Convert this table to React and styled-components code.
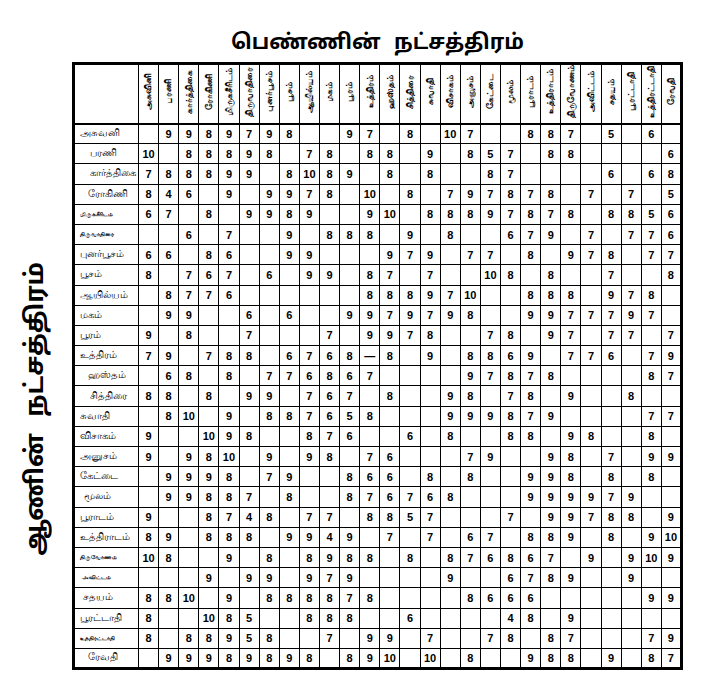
import React from 'react';
import styled, { createGlobalStyle } from 'styled-components';

const GlobalStyle = createGlobalStyle`
  body {
    margin: 0;
    background: #fff;
    color: #000;
    font-family: "Liberation Sans", Arial, sans-serif;
  }
`;

const STARS = [
  'அசுவினி', 'பரணி', 'கார்த்திகை', 'ரோகிணி', 'மிருகசீரிடம்', 'திருவாதிரை',
  'புனர்பூசம்', 'பூசம்', 'ஆயில்யம்', 'மகம்', 'பூரம்', 'உத்திரம்', 'ஹஸ்தம்',
  'சித்திரை', 'சுவாதி', 'விசாகம்', 'அனுசம்', 'கேட்டை', 'மூலம்', 'பூராடம்',
  'உத்திராடம்', 'திருவோணம்', 'அவிட்டம்', 'சதயம்', 'பூரட்டாதி',
  'உத்திரட்டாதி', 'ரேவதி',
];

// row label, indent, small text, values ("_" = empty)
const ROWS = [
  ['அசுவனி', 0, false, '_,9,9,8,9,7,9,8,_,_,9,7,_,8,_,10,7,_,_,8,8,7,_,5,_,6,_'],
  ['பரணி', 10, false, '10,_,8,8,8,9,8,_,7,8,_,8,8,_,9,_,8,5,7,_,8,8,_,_,_,_,6'],
  ['கார்த்திகை', 10, false, '7,8,8,8,9,9,_,8,10,8,9,_,8,_,8,_,_,8,7,_,_,_,_,6,_,6,8'],
  ['ரோகிணி', 8, false, '8,4,6,_,9,_,9,9,7,8,_,10,_,8,_,7,9,7,8,7,8,_,7,_,7,_,5'],
  ['மிருகசீரிடம்', 0, true, '6,7,_,8,_,9,9,8,9,_,_,9,10,_,8,8,8,9,7,8,7,8,_,8,8,5,6'],
  ['திருவாதிரை', 0, true, '_,_,6,_,7,_,_,9,_,8,8,8,_,9,_,8,_,_,6,7,9,_,7,_,7,7,6'],
  ['புனர்பூசம்', 0, false, '6,6,_,8,6,_,_,9,9,_,_,_,9,7,9,_,7,7,_,8,_,9,7,8,_,7,7'],
  ['பூசம்', 0, false, '8,_,7,6,7,_,6,_,9,9,_,8,7,_,7,_,_,10,8,_,8,_,_,7,_,_,8'],
  ['ஆயில்யம்', 0, false, '_,8,7,7,6,_,_,_,_,_,_,8,8,8,9,7,10,_,_,8,8,8,_,9,7,8,_'],
  ['மகம்', 0, false, '_,9,9,_,_,6,_,6,_,_,9,9,7,9,7,9,8,_,_,9,9,7,7,7,9,7,_'],
  ['பூரம்', 0, false, '9,_,8,_,_,7,_,_,_,7,_,9,9,7,8,_,_,7,8,_,9,7,_,7,7,_,7'],
  ['உத்திரம்', 0, false, '7,9,_,7,8,8,_,6,7,6,8,—,8,_,9,_,8,8,6,9,_,7,7,6,_,7,9'],
  ['ஹஸ்தம்', 8, false, '_,6,8,_,8,_,7,7,6,8,6,7,_,_,_,_,9,7,8,7,8,_,_,_,_,8,7'],
  ['சித்திரை', 10, false, '8,8,_,8,_,9,9,_,7,6,7,_,8,_,_,9,8,_,7,8,_,9,_,_,8,_,_'],
  ['சுவாதி', 0, false, '_,8,10,_,9,_,8,8,7,6,5,8,_,_,_,9,9,9,8,7,9,_,_,_,_,7,7'],
  ['விசாகம்', 0, false, '9,_,_,10,9,8,_,_,8,7,6,_,_,6,_,8,_,_,8,8,_,9,8,_,_,8,_'],
  ['அனுசம்', 0, false, '9,_,9,8,10,_,9,_,9,8,_,7,6,_,_,_,7,9,_,_,9,8,_,7,_,9,9'],
  ['கேட்டை', 0, false, '_,9,9,9,8,_,7,9,_,_,8,6,6,_,8,_,8,_,_,9,9,8,_,8,_,8,_'],
  ['மூலம்', 4, false, '_,9,9,8,8,7,_,8,_,_,8,7,6,7,6,8,_,_,_,9,9,9,9,7,9,_,_'],
  ['பூராடம்', 0, false, '9,_,_,8,7,4,8,_,7,7,_,8,8,5,7,_,_,_,7,_,9,9,7,8,8,_,9'],
  ['உத்திராடம்', 0, false, '8,9,_,8,8,8,_,9,9,4,9,_,7,_,7,_,6,7,_,8,8,9,_,8,_,9,10'],
  ['திருவோணம்', 0, true, '10,8,_,_,9,_,8,_,8,9,8,8,_,8,_,8,7,6,8,6,7,_,9,_,9,10,9'],
  ['அவிட்டம்', 2, true, '_,_,_,9,_,9,9,_,9,7,9,_,_,_,_,9,_,_,6,7,8,9,_,_,9,_,_'],
  ['சதயம்', 3, false, '8,8,10,_,9,_,8,8,8,8,7,8,_,_,_,_,8,6,6,6,_,_,_,_,_,9,9'],
  ['பூரட்டாதி', 0, false, '8,_,_,10,8,5,_,_,8,8,8,_,_,6,_,_,_,_,4,8,_,9,_,_,_,_,_'],
  ['உத்திரட்டாதி', 0, true, '8,_,8,8,9,5,8,_,_,7,_,9,9,_,7,_,_,7,8,_,8,7,_,_,_,7,9'],
  ['ரேவதி', 8, false, '_,9,9,9,8,9,8,9,8,_,8,9,10,_,10,_,8,_,_,9,8,8,_,9,_,8,7'],
];

const Page = styled.div`
  display: grid;
  grid-template-columns: 72px 611px;
  grid-template-rows: 62px auto;
`;

const Title = styled.h1`
  grid-column: 2;
  grid-row: 1;
  align-self: end;
  margin: 0 0 5px;
  text-align: center;
  font-family: "Noto Sans Tamil", "Lohit Tamil", "Noto Sans", sans-serif;
  font-size: 21px;
  font-weight: 700;
  word-spacing: 8px;
`;

const SideTitle = styled.div`
  grid-column: 1;
  grid-row: 2;
  justify-self: center;
  align-self: start;
  margin-top: 200px;
  writing-mode: vertical-rl;
  transform: rotate(180deg);
  font-family: "Noto Sans Tamil", "Lohit Tamil", "Noto Sans", sans-serif;
  font-size: 25px;
  font-weight: 700;
  word-spacing: 10px;
  white-space: nowrap;
`;

const Grid = styled.table`
  grid-column: 2;
  grid-row: 2;
  width: 611px;
  table-layout: fixed;
  border-collapse: collapse;
  border: 3px solid #000;
`;

const HeadRow = styled.tr`
  height: 60px;
  border-bottom: 2px solid #000;
`;

const BodyRow = styled.tr`
  height: 20.2px;
`;

const Corner = styled.th`
  width: 61px;
  border: 1px solid #000;
`;

const HeadCell = styled.th`
  border: 1px solid #000;
  padding: 0;
  text-align: center;
  vertical-align: middle;
`;

const VerticalText = styled.span`
  display: inline-block;
  writing-mode: vertical-rl;
  transform: rotate(180deg);
  font-size: 8.5px;
  font-weight: 700;
  white-space: nowrap;
  line-height: 1;
`;

const RowLabel = styled.td`
  border: 1px solid #000;
  padding: 0 0 0 ${({ $indent }) => 5 + $indent}px;
  font-size: ${({ $small }) => ($small ? '6px' : '9.5px')};
  font-weight: ${({ $small }) => ($small ? 700 : 400)};
  white-space: nowrap;
  overflow: hidden;
`;

const Cell = styled.td`
  border: 1px solid #000;
  padding: 0;
  text-align: center;
  font-size: 11px;
  font-weight: 700;
`;

export default function App() {
  return (
    <>
      <GlobalStyle />
      <Page>
        <Title>பெண்ணின் நட்சத்திரம்</Title>
        <SideTitle>ஆணின் நட்சத்திரம்</SideTitle>
        <Grid>
          <thead>
            <HeadRow>
              <Corner />
              {STARS.map((name) => (
                <HeadCell key={name}>
                  <VerticalText>{name}</VerticalText>
                </HeadCell>
              ))}
            </HeadRow>
          </thead>
          <tbody>
            {ROWS.map(([label, indent, small, values]) => (
              <BodyRow key={label}>
                <RowLabel $indent={indent} $small={small}>
                  {label}
                </RowLabel>
                {values.split(',').map((v, i) => (
                  <Cell key={i}>{v === '_' ? '' : v}</Cell>
                ))}
              </BodyRow>
            ))}
          </tbody>
        </Grid>
      </Page>
    </>
  );
}
